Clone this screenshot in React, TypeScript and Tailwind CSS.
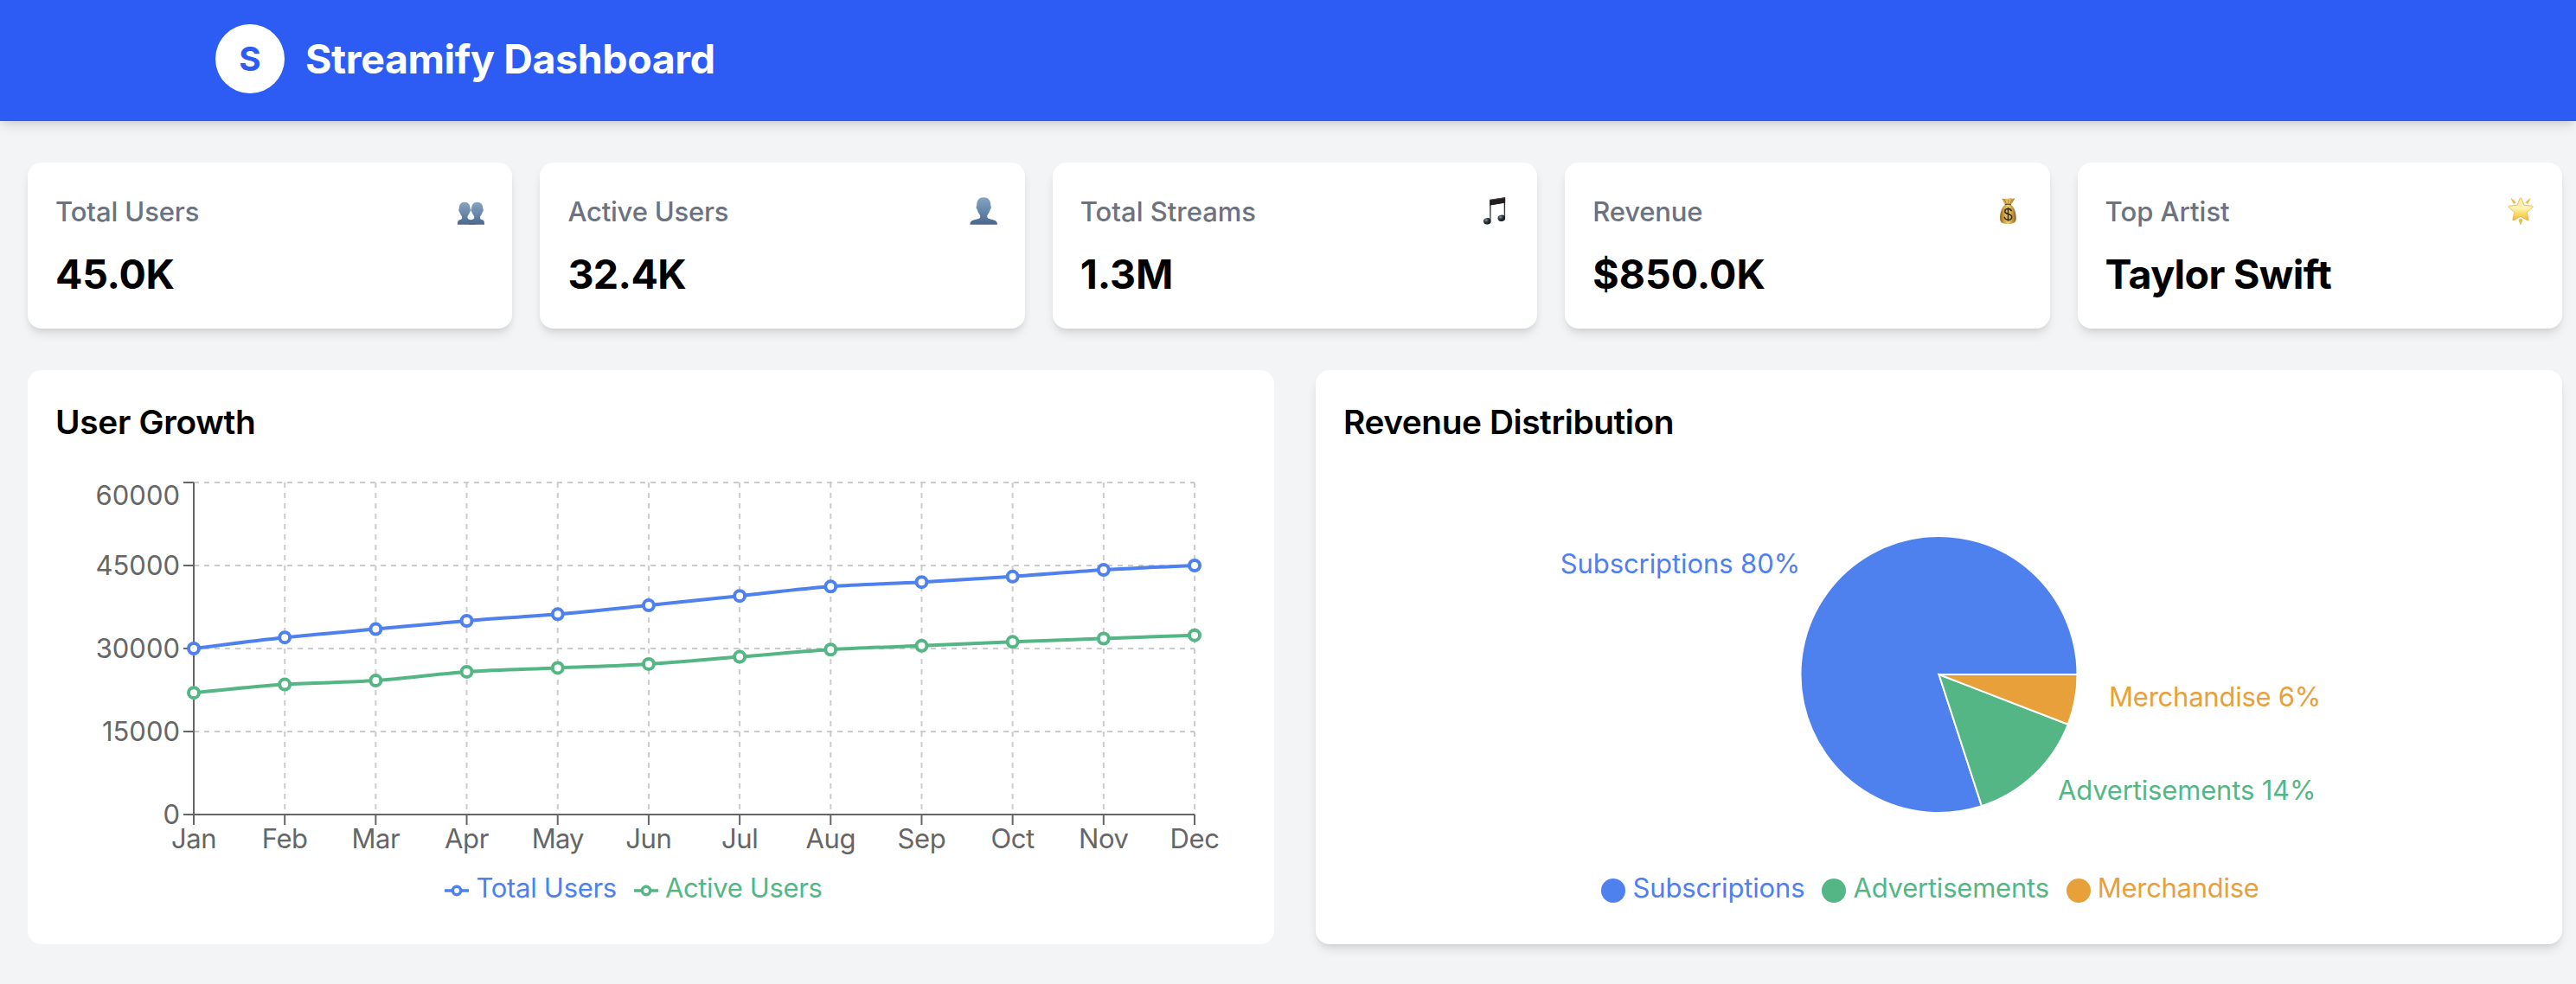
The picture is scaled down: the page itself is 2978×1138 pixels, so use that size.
import type { ReactNode } from 'react';

const BLUE = '#4e80ee';
const GREEN = '#55b685';
const ORANGE = '#e8a03b';

/* ---------- Stat card icons ---------- */

function UsersIcon() {
  return (
    <svg className="size-8" viewBox="0 0 32 32">
      <defs>
        <linearGradient id="users-fill" x1="0" y1="5" x2="0" y2="32" gradientUnits="userSpaceOnUse">
          <stop offset="0" stopColor="#86a5c3" />
          <stop offset="0.55" stopColor="#6887aa" />
          <stop offset="1" stopColor="#4b6589" />
        </linearGradient>
      </defs>
      <g fill="url(#users-fill)">
        <path d="M9 5.7c4.200 0 6.600 3 6.600 7.100 0 .9.700 1.100.500 2.600-.2 1.200-.9 1.400-1.100 2.100-.6 2-1.500 3.400-2.400 4.500-.4 2.300.2 3.300 2.400 3.900 3.700.9 6.500 1.600 6.500 5.800H.9c0-4 .8-5 3.200-5.700 1.900-.5 2.300-1.700 1.700-4.100-1-1.200-1.900-2.600-2.400-4.400-.2-.7-.9-1-1.100-2.100-.2-1.400.5-1.700.5-2.600C2.800 8.700 4.900 5.700 9 5.700Z" />
        <path d="M23.800 5.700c4.200 0 6.500 3 6.500 7.100 0 .9.700 1.200.5 2.600-.2 1.100-.9 1.400-1.100 2.100-.5 1.800-1.400 3.200-2.400 4.400-.6 2.400-.2 3.600 1.700 4.100 2.400.7 3 1.700 3 5.700H14.300c0-4.200.2-4.900 3.400-5.700 2.300-.6 2.900-1.600 2.400-4-.9-1.100-1.800-2.500-2.400-4.500-.2-.7-.9-.9-1.100-2.100-.2-1.500.5-1.700.5-2.600 0-4.100 2.500-7.100 6.700-7.100Z" />
      </g>
    </svg>
  );
}

function UserIcon() {
  return (
    <svg className="size-8" viewBox="0 0 32 32">
      <defs>
        <linearGradient id="user-fill" x1="0" y1="0" x2="0" y2="32" gradientUnits="userSpaceOnUse">
          <stop offset="0" stopColor="#85a5c4" />
          <stop offset="0.55" stopColor="#6484a8" />
          <stop offset="1" stopColor="#4a658c" />
        </linearGradient>
      </defs>
      <path
        fill="url(#user-fill)"
        d="M16.200.2c5 0 8 3.400 8 8.200 0 1-.1 1.700.3 2.200.7.900.3 3-.9 3.800-.5 2.200-1.400 4-2.600 5.500-.9 1.100-1 3.200-.2 4.100.8 1 2.500 1.300 4.600 1.700 4.500.8 6.500 2.500 6.600 6H.4c.1-3.500 2.100-5.200 6.600-6 2.100-.4 3.900-.7 4.700-1.700.7-.9.6-3-.3-4.100-1.200-1.500-2.100-3.300-2.600-5.500-1.200-.8-1.600-2.900-.9-3.800.4-.5.300-1.200.3-2.200 0-4.800 3-8.200 8-8.200Z"
      />
    </svg>
  );
}

function MusicIcon() {
  return (
    <svg className="size-8" viewBox="0 0 32 32">
      <defs>
        <radialGradient id="note-head" cx="0.4" cy="0.3" r="0.75">
          <stop offset="0" stopColor="#8797a3" />
          <stop offset="0.45" stopColor="#2a3238" />
          <stop offset="1" stopColor="#101315" />
        </radialGradient>
        <linearGradient id="note-stem" x1="0" y1="0" x2="0" y2="30" gradientUnits="userSpaceOnUse">
          <stop offset="0" stopColor="#231f20" />
          <stop offset="1" stopColor="#46545f" />
        </linearGradient>
      </defs>
      <path fill="url(#note-stem)" d="M9.200 2.900 27.100.2v23h-1.400V6.800L10.600 9.300v17.400H9.200Z" />
      <path fill="#241d1e" d="M9.200 2.900 27.100.2v6.300L9.200 9.400Z" />
      <path stroke="#5d6c77" strokeWidth="0.700" d="M9.400 3.200 26.800.6" />
      <ellipse cx="6.300" cy="27.800" rx="4.300" ry="3.700" transform="rotate(-14 6.300 27.800)" fill="url(#note-head)" />
      <ellipse cx="22.800" cy="24.300" rx="4.300" ry="3.700" transform="rotate(-14 22.800 24.300)" fill="url(#note-head)" />
    </svg>
  );
}

function MoneyBagIcon() {
  return (
    <svg className="size-8" viewBox="0 0 32 32">
      <defs>
        <linearGradient id="bag-fill" x1="6" y1="0" x2="25" y2="0" gradientUnits="userSpaceOnUse">
          <stop offset="0" stopColor="#87601b" />
          <stop offset="0.22" stopColor="#c99e3f" />
          <stop offset="0.5" stopColor="#ecce72" />
          <stop offset="0.8" stopColor="#c2933a" />
          <stop offset="1" stopColor="#7d5518" />
        </linearGradient>
      </defs>
      <path
        fill="url(#bag-fill)"
        d="M8.200 1.600c1.500.7 2.500-.2 3.800.2 1.500.4 2.200-.6 3.600-.3 1.500.3 2.500-.5 3.600.1 1 .5 2.200-.5 4-.1-.9 2.300-2.600 4.600-4.300 7.300 3.800 3.100 5.900 9.400 5.800 15.700-.1 4.600-2.100 6.500-9.300 6.500S6.200 29.100 6.100 24.500C6 18.200 8.200 11.900 11.900 8.800 10.600 6.200 9.300 3.900 8.200 1.600Z"
      />
      <path d="M11.900 8.600c2.300-.6 4.700-.6 7 0" stroke="#79511a" strokeWidth="1.300" fill="none" />
      <path d="m11.400 2.800 2 5M15.700 2.700v5M20 2.800l-2.100 5" stroke="#96702a" strokeWidth="0.700" fill="none" />
      <path
        d="M19.300 16.200c-.3-1.900-1.700-2.800-3.800-2.800s-3.700 1.100-3.700 3c0 4.300 7.900 1.900 7.900 6.500 0 2.100-1.700 3.300-4.100 3.300-2.500 0-4.200-1.200-4.400-3.400M15.500 11.800v16"
        stroke="#2c2822"
        strokeWidth="1.500"
        fill="none"
      />
    </svg>
  );
}

function StarIcon() {
  return (
    <svg className="size-8" viewBox="0 0 32 32">
      <defs>
        <linearGradient id="star-fill" x1="0" y1="1" x2="0" y2="27" gradientUnits="userSpaceOnUse">
          <stop offset="0" stopColor="#fbe9a0" />
          <stop offset="0.45" stopColor="#fdf3b4" />
          <stop offset="0.75" stopColor="#f8d65c" />
          <stop offset="1" stopColor="#eeb040" />
        </linearGradient>
      </defs>
      <path
        fill="url(#star-fill)"
        stroke="#e9b94e"
        strokeWidth="0.900"
        strokeLinejoin="round"
        d="M16 .9c.5 0 .8.400 1 .9l3.100 7.600 8.800.6c1.200.1 1.600 1.200.700 2l-6.500 5.500 2 8c.3 1.200-.5 1.800-1.500 1.200L16 22.400l-7.600 4.300c-1 .6-1.800 0-1.500-1.200l2-8L2.400 12c-.9-.8-.5-1.900.7-2l8.800-.6L15 1.800c.2-.5.5-.9 1-.9Z"
      />
      <g fill="#ecbc4c">
        <path d="M4.900 2.100c-.4-.9.200-1.200.8-.7l4.400 4.200c.8 1-1.300 2.500-2.500 2Z" />
        <path d="M27.300 2.100c.4-.9-.2-1.200-.8-.7l-4.400 4.200c-.8 1 1.300 2.500 2.500 2Z" />
        <path d="M16 24.700c1.400 0 2.400 1.200 2.200 2.300l-1.500 4.300c-.3.800-1.100.8-1.400 0L13.800 27c-.2-1.100.8-2.300 2.200-2.300Z" />
      </g>
    </svg>
  );
}

/* ---------- Stat cards ---------- */

interface Stat {
  label: string;
  labelTracking: string;
  value: string;
  valueTracking: string;
  icon: ReactNode;
}

const stats: Stat[] = [
  { label: 'Total Users', labelTracking: 'tracking-[-0.1px]', value: '45.0K', valueTracking: 'tracking-[-0.28px]', icon: <UsersIcon /> },
  { label: 'Active Users', labelTracking: 'tracking-[-0.19px]', value: '32.4K', valueTracking: 'tracking-[-0.6px]', icon: <UserIcon /> },
  { label: 'Total Streams', labelTracking: 'tracking-normal', value: '1.3M', valueTracking: 'tracking-[-0.1px]', icon: <MusicIcon /> },
  { label: 'Revenue', labelTracking: 'tracking-[-0.15px]', value: '$850.0K', valueTracking: 'tracking-[0.05px]', icon: <MoneyBagIcon /> },
  { label: 'Top Artist', labelTracking: 'tracking-normal', value: 'Taylor Swift', valueTracking: 'tracking-[-0.65px]', icon: <StarIcon /> },
];

function StatCard({ stat }: { stat: Stat }) {
  return (
    <div className="h-48 rounded-2xl bg-white px-8 pt-[33px] shadow-[0_8px_12px_-2px_rgba(0,0,0,0.1),0_4px_8px_-4px_rgba(0,0,0,0.1)]">
      <div className="flex items-start justify-between">
        <h3 className={`text-[31px] leading-[48px] font-medium text-[#6b7280] ${stat.labelTracking}`}>{stat.label}</h3>
        <div className="mt-[7px]">{stat.icon}</div>
      </div>
      <p className={`mt-4 text-[46.5px] leading-[64px] font-bold text-black ${stat.valueTracking}`}>{stat.value}</p>
    </div>
  );
}

/* ---------- User growth line chart ---------- */

const months = [
  { name: 'Jan', total: 30000, active: 22000 },
  { name: 'Feb', total: 32000, active: 23500 },
  { name: 'Mar', total: 33500, active: 24200 },
  { name: 'Apr', total: 35000, active: 25800 },
  { name: 'May', total: 36200, active: 26500 },
  { name: 'Jun', total: 37800, active: 27200 },
  { name: 'Jul', total: 39500, active: 28500 },
  { name: 'Aug', total: 41200, active: 29800 },
  { name: 'Sep', total: 42000, active: 30500 },
  { name: 'Oct', total: 43000, active: 31200 },
  { name: 'Nov', total: 44200, active: 31800 },
  { name: 'Dec', total: 45000, active: 32400 },
];

const PLOT = { left: 160, right: 1317, top: 10, bottom: 394 };
const yTicks = [0, 15000, 30000, 45000, 60000];

const xAt = (i: number) => PLOT.left + (i * (PLOT.right - PLOT.left)) / (months.length - 1);
const yAt = (v: number) => PLOT.bottom - (v / 60000) * (PLOT.bottom - PLOT.top);

/* Monotone cubic interpolation over evenly spaced points. */
function monotonePath(values: number[]) {
  const ys = values.map(yAt);
  const step = xAt(1) - xAt(0);
  const slopes = ys.slice(1).map((y, i) => (y - ys[i]) / step);
  const last = ys.length - 1;
  const tangents = ys.map((_, i) => {
    if (i === 0 || i === last) return 0;
    const a = slopes[i - 1];
    const b = slopes[i];
    return (Math.sign(a) + Math.sign(b)) * Math.min(Math.abs(a), Math.abs(b), 0.5 * Math.abs((a + b) / 2));
  });
  tangents[0] = (3 * slopes[0] - tangents[1]) / 2;
  tangents[last] = (3 * slopes[last - 1] - tangents[last - 1]) / 2;
  let d = `M${xAt(0)},${ys[0]}`;
  for (let i = 0; i < last; i++) {
    const t = step / 3;
    d += `C${xAt(i) + t},${ys[i] + t * tangents[i]} ${xAt(i + 1) - t},${ys[i + 1] - t * tangents[i + 1]} ${xAt(i + 1)},${ys[i + 1]}`;
  }
  return d;
}

const monthTracking: Record<string, string> = { May: 'tracking-[-0.8px]' };

function GrowthChart() {
  const series = [
    { color: BLUE, values: months.map((m) => m.total) },
    { color: GREEN, values: months.map((m) => m.active) },
  ];
  return (
    <svg className="block h-[454px] w-full" viewBox="0 0 1377 454">
      <g stroke="#ccc" strokeWidth="2" strokeDasharray="6 6">
        {yTicks.map((v) => (
          <line key={v} x1={PLOT.left} x2={PLOT.right} y1={yAt(v)} y2={yAt(v)} />
        ))}
        {months.map((m, i) => (
          <line key={m.name} x1={xAt(i)} x2={xAt(i)} y1={PLOT.top} y2={PLOT.bottom} />
        ))}
      </g>
      <g stroke="#666" strokeWidth="2">
        <line x1={PLOT.left} x2={PLOT.right} y1={PLOT.bottom} y2={PLOT.bottom} />
        <line x1={PLOT.left} x2={PLOT.left} y1={PLOT.top} y2={PLOT.bottom} />
        {months.map((m, i) => (
          <line key={m.name} x1={xAt(i)} x2={xAt(i)} y1={PLOT.bottom} y2={PLOT.bottom + 12} />
        ))}
        {yTicks.map((v) => (
          <line key={v} x1={PLOT.left - 12} x2={PLOT.left} y1={yAt(v)} y2={yAt(v)} />
        ))}
      </g>
      <g className="text-[31px]" fill="#666">
        {yTicks.map((v) => (
          <text key={v} x={PLOT.left - 16} y={(v === 60000 ? 25 : yAt(v)) + 11.4} textAnchor="end">
            {v}
          </text>
        ))}
        {months.map((m, i) => (
          <text key={m.name} className={monthTracking[m.name] ?? 'tracking-[-0.4px]'} x={xAt(i)} y={PLOT.bottom + 38.7} textAnchor="middle">
            {m.name}
          </text>
        ))}
      </g>
      {series.map((s) => (
        <g key={s.color} stroke={s.color}>
          <path d={monotonePath(s.values)} fill="none" strokeWidth="4" />
          {s.values.map((v, i) => (
            <circle key={i} cx={xAt(i)} cy={yAt(v)} r="6" fill="#fff" strokeWidth="4" />
          ))}
        </g>
      ))}
    </svg>
  );
}

/* ---------- Revenue pie chart ---------- */

const revenue = [
  { name: 'Subscriptions', value: 680, color: BLUE, tracking: 'tracking-[-0.09px]' },
  { name: 'Advertisements', value: 120, color: GREEN, tracking: 'tracking-[-0.16px]' },
  { name: 'Merchandise', value: 50, color: ORANGE, tracking: 'tracking-[-0.24px]' },
];

function RevenueChart() {
  const cx = 688.5;
  const cy = 232;
  const r = 160;
  const total = revenue.reduce((sum, s) => sum + s.value, 0);
  const point = (deg: number, radius: number) => {
    const rad = (deg * Math.PI) / 180;
    return [cx + radius * Math.cos(rad), cy - radius * Math.sin(rad)];
  };
  let angle = 0;
  const slices = revenue.map((s) => {
    const start = angle;
    const sweep = (s.value / total) * 360;
    angle += sweep;
    const [x1, y1] = point(start, r);
    const [x2, y2] = point(start + sweep, r);
    const [lx, ly] = point(start + sweep / 2, r + 40);
    return {
      ...s,
      d: `M${cx},${cy}L${x1},${y1}A${r},${r} 0 ${sweep > 180 ? 1 : 0} 0 ${x2},${y2}Z`,
      lx,
      ly,
      percent: Math.round((s.value / total) * 100),
    };
  });
  return (
    <svg className="block h-[454px] w-full" viewBox="0 0 1377 454">
      {slices.map((s) => (
        <path key={s.name} d={s.d} fill={s.color} stroke="#fff" strokeWidth="2" />
      ))}
      {slices.map((s) => (
        <text
          key={s.name}
          x={s.lx}
          y={s.ly}
          dx={s.lx > cx ? 0 : 1.3}
          dy={s.lx > cx ? 0 : 0.7}
          fill={s.color}
          textAnchor={s.lx > cx ? 'start' : 'end'}
          className={`text-[31px] ${s.tracking}`}
        >
          {`${s.name} ${s.percent}%`}
        </text>
      ))}
    </svg>
  );
}

/* ---------- Legends ---------- */

interface LegendItem {
  name: string;
  color: string;
  textClass: string;
  kind: 'line' | 'circle';
}

function Legend({ items, className }: { items: LegendItem[]; className: string }) {
  return (
    <ul className={`flex h-12 justify-center ${className}`}>
      {items.map((item) => (
        <li key={item.name} className="mr-5 flex items-center gap-2">
          <svg className="mt-2 size-7" viewBox="0 0 32 32">
            {item.kind === 'line' ? (
              <g fill="none" stroke={item.color} strokeWidth="4">
                <path d="M0 16h10.670M21.330 16H32" />
                <circle cx="16" cy="16" r="5.330" />
              </g>
            ) : (
              <circle cx="16" cy="16" r="16" fill={item.color} />
            )}
          </svg>
          <span className={`pt-0.5 text-[31px] leading-[48px] ${item.textClass}`}>{item.name}</span>
        </li>
      ))}
    </ul>
  );
}

const growthLegend: LegendItem[] = [
  { name: 'Total Users', color: BLUE, textClass: 'text-[#4e80ee] tracking-[-0.29px]', kind: 'line' },
  { name: 'Active Users', color: GREEN, textClass: 'text-[#55b685] tracking-[-0.36px]', kind: 'line' },
];

const revenueLegend: LegendItem[] = [
  { name: 'Subscriptions', color: BLUE, textClass: 'text-[#4e80ee] tracking-[-0.14px]', kind: 'circle' },
  { name: 'Advertisements', color: GREEN, textClass: 'text-[#55b685] tracking-[-0.22px]', kind: 'circle' },
  { name: 'Merchandise', color: ORANGE, textClass: 'text-[#e8a03b] tracking-[-0.29px]', kind: 'circle' },
];

/* ---------- Page ---------- */

export default function App() {
  return (
    <div className="min-h-screen bg-[#f3f4f6] font-['Inter',sans-serif] text-black">
      <header className="flex h-[140px] items-center gap-6 bg-[#2c5cf3] pb-1 pl-[249px] shadow-[0_8px_12px_-2px_rgba(0,0,0,0.1),0_4px_8px_-4px_rgba(0,0,0,0.1)]">
        <div className="flex size-20 items-center justify-center rounded-full bg-white">
          <span className="text-[38.8px] leading-[56px] font-bold text-[#2c5cf3]">S</span>
        </div>
        <h1 className="text-[46.5px] leading-[64px] font-bold tracking-[-0.38px] text-white">Streamify Dashboard</h1>
      </header>

      <main className="pt-12 pr-4 pl-8">
        <section className="grid grid-cols-5 gap-8">
          {stats.map((s) => (
            <StatCard key={s.label} stat={s} />
          ))}
        </section>

        <section className="mt-12 grid grid-cols-2 gap-12">
          <div className="h-[664px] rounded-2xl bg-white p-8">
            <h2 className="mb-8 text-[38.8px] leading-[56px] font-semibold tracking-[-0.3px]">User Growth</h2>
            <GrowthChart />
            <Legend items={growthLegend} className="pr-[60px] pl-10" />
          </div>
          <div className="h-[664px] rounded-2xl bg-white p-8 shadow-[0_8px_12px_-2px_rgba(0,0,0,0.1),0_4px_8px_-4px_rgba(0,0,0,0.1)]">
            <h2 className="mb-8 text-[38.8px] leading-[56px] font-semibold tracking-[-0.42px]">Revenue Distribution</h2>
            <RevenueChart />
            <Legend items={revenueLegend} className="px-2.5" />
          </div>
        </section>
      </main>
    </div>
  );
}
